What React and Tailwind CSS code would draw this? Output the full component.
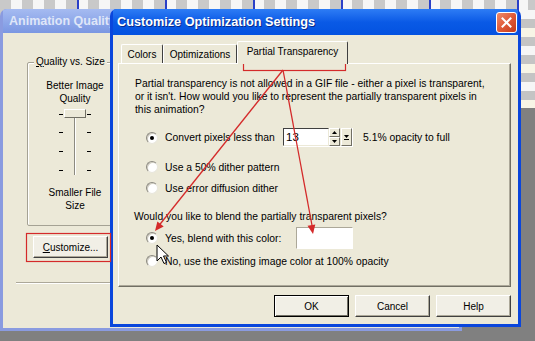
import React from 'react';

function Radio({ checked }) {
  return (
    <span className="flex h-[12px] w-[12px] shrink-0 items-center justify-center rounded-full border border-t-[#8c8a80] border-l-[#8c8a80] border-r-[#e8e6dc] border-b-[#e8e6dc] bg-white shadow-[inset_1px_1px_0_#d0cdc2]">
      {checked && <span className="h-[4px] w-[4px] rounded-full bg-black" />}
    </span>
  );
}

function Btn({ children, def }) {
  return (
    <div
      className={
        def
          ? 'flex h-[22px] w-[75px] items-center justify-center border border-black bg-[#f1efe6] shadow-[inset_1px_1px_0_#fff,inset_-1px_-1px_0_#716f64]'
          : 'flex h-[22px] w-[75px] items-center justify-center border border-t-white border-l-white border-r-[#404040] border-b-[#404040] bg-[#f1efe6] shadow-[inset_-1px_-1px_0_#aca899]'
      }
    >
      {children}
    </div>
  );
}

function Tab({ children, active }) {
  return (
    <div
      className={
        active
          ? 'relative z-10 -mb-[1px] flex h-[23px] w-[111px] items-start justify-center rounded-t-[2px] border-t border-l border-r border-t-white border-l-white border-r-[#404040] bg-[#ece9d8] pt-[3px]'
          : 'flex h-[19px] items-center justify-center rounded-t-[2px] border-t border-l border-r border-t-white border-l-white border-r-[#404040] bg-[#ece9d8]'
      }
    >
      {children}
    </div>
  );
}

export default function App() {
  return (
    <div className="relative h-[341px] w-[535px] overflow-hidden bg-[#808080] font-['Liberation_Sans',Arial,sans-serif] text-[10px] leading-[13px] text-black">
      {/* desktop behind the windows */}
      <div className="absolute left-0 top-0 h-[108px] w-full bg-[image:repeating-linear-gradient(90deg,transparent_0_77px,#2a3fc8_77px_79px,transparent_79px_88px),repeating-linear-gradient(90deg,#c9c9c9_0_11px,#f6f6f6_11px_22px)]" />
      <div className="absolute right-0 top-[10px] h-[98px] w-[16px] bg-[image:repeating-linear-gradient(180deg,#f6f6f6_0_9px,#c4c4c4_9px_18px,#f7f5e6_18px_27px,#c4c4c4_27px_36px)]" />

      {/* back window: Animation Quality */}
      <div className="absolute left-0 top-[9px] flex h-[322px] w-[462px] flex-col overflow-hidden rounded-t-[7px] bg-[#8a9be0] px-[3px] pb-[3px]">
        <div className="flex h-[24px] shrink-0 items-center pl-[6px] text-[12.5px] font-bold text-[#dfe6f8] bg-gradient-to-b from-[#a5bbf1] to-[#7b97e2]">
          Animation Quality
        </div>
        <div className="flex flex-1 flex-col bg-[#ece9d8]">
          <div className="relative ml-[24px] mt-[29px] h-[164px] w-[120px] rounded-[2px] border border-[#a5a294] shadow-[inset_1px_1px_0_#fff]">
            <span className="absolute -top-[7px] left-[6px] bg-[#ece9d8] px-[2px] leading-[12px]">
              <span className="underline">Q</span>uality vs. Size
            </span>
            <div className="flex w-[94px] flex-col items-center pt-[16px] leading-[13px]">
              <span>Better Image</span>
              <span>Quality</span>
              <div className="relative mt-[2px] h-[70px] w-[32px]">
                <div className="absolute left-[15px] top-[5px] h-[63px] w-[2px] border-l border-l-[#8c8a80] border-r border-r-white" />
                <div className="absolute left-0 top-[7px] h-[1px] w-[4px] bg-black" />
                <div className="absolute left-0 top-[25px] h-[1px] w-[4px] bg-black" />
                <div className="absolute left-0 top-[44px] h-[1px] w-[4px] bg-black" />
                <div className="absolute left-0 top-[63px] h-[1px] w-[4px] bg-black" />
                <div className="absolute right-0 top-[7px] h-[1px] w-[4px] bg-black" />
                <div className="absolute right-0 top-[25px] h-[1px] w-[4px] bg-black" />
                <div className="absolute right-0 top-[44px] h-[1px] w-[4px] bg-black" />
                <div className="absolute right-0 top-[63px] h-[1px] w-[4px] bg-black" />
                <div className="absolute left-[5px] top-[2px] h-[9px] w-[22px] border border-t-white border-l-white border-r-[#716f64] border-b-[#716f64] bg-[#ece9d8]" />
              </div>
              <span className="mt-[9px]">Smaller File</span>
              <span>Size</span>
            </div>
          </div>
          <div className="ml-[30px] mt-[10px]">
            <Btn>
              <span>
                <span className="underline">C</span>ustomize...
              </span>
            </Btn>
          </div>
          <div className="ml-[13px] mt-[24px] h-[2px] w-[120px] border-t border-t-[#aca899] border-b border-b-white" />
        </div>
      </div>

      {/* front dialog: Customize Optimization Settings */}
      <div className="absolute left-[110px] top-[9px] flex h-[318px] w-[411px] flex-col overflow-hidden rounded-t-[7px] bg-[#0a46dc] px-[3px] pb-[3px]">
        <div className="flex h-[26px] shrink-0 items-center justify-between bg-gradient-to-b from-[#2d7cf5] via-[#0a5ae6] to-[#0452e0] pl-[4px] pr-[1px]">
          <span className="text-[12.7px] font-bold text-white [text-shadow:1px_1px_0_#0a2a8a]">Customize Optimization Settings</span>
          <div className="flex h-[21px] w-[21px] items-center justify-center rounded-[3px] border border-white bg-gradient-to-br from-[#ee8a6a] via-[#e05a38] to-[#c23a1a]">
            <svg width="11" height="11" viewBox="0 0 11 11">
              <path d="M1.5 1.5 L9.5 9.5 M9.5 1.5 L1.5 9.5" stroke="#fff" strokeWidth="2" strokeLinecap="square" />
            </svg>
          </div>
        </div>
        <div className="flex flex-1 flex-col bg-[#ece9d8]">
          <div className="flex h-[28px] items-end pl-[8px]">
            <div className="w-[42px]">
              <Tab>Colors</Tab>
            </div>
            <div className="w-[74px]">
              <Tab>Optimizations</Tab>
            </div>
            <Tab active>Partial Transparency</Tab>
          </div>
          <div className="ml-[5px] mr-[7px] flex h-[224px] flex-col border border-t-white border-l-white border-r-[#716f64] border-b-[#716f64] shadow-[inset_-1px_-1px_0_#aca899] pt-[13px] text-[10.35px]">
            <p className="pl-[16px] leading-[13px]">
              Partial transparency is not allowed in a GIF file - either a pixel is transparent,
              <br />
              or it isn't. How would you like to represent the partially transparent pixels in
              <br />
              this animation?
            </p>
            <div className="mt-[12px] flex h-[19px] items-center pl-[27px]">
              <Radio checked />
              <span className="ml-[7px] w-[118px]">Convert pixels less than</span>
              <div className="flex h-[19px] border-b border-r border-b-white border-r-white">
                <div className="flex w-[46px] items-center border border-t-[#404040] border-l-[#404040] border-r-[#ece9d8] border-b-[#ece9d8] bg-white pl-[2px] text-[11.5px]">
                  13
                </div>
                <div className="flex w-[11px] flex-col">
                  <div className="flex h-1/2 items-center justify-center border border-t-white border-l-white border-r-[#716f64] border-b-[#716f64] bg-[#ece9d8]">
                    <svg width="5" height="3" viewBox="0 0 5 3"><path d="M2.5 0 L5 3 L0 3 Z" fill="#000" /></svg>
                  </div>
                  <div className="flex h-1/2 items-center justify-center border border-t-white border-l-white border-r-[#716f64] border-b-[#716f64] bg-[#ece9d8]">
                    <svg width="5" height="3" viewBox="0 0 5 3"><path d="M0 0 L5 0 L2.5 3 Z" fill="#000" /></svg>
                  </div>
                </div>
                <div className="ml-[1px] flex w-[11px] flex-col items-center justify-center gap-[1px] border border-t-white border-l-white border-r-[#716f64] border-b-[#716f64] bg-[#ece9d8]">
                  <svg width="5" height="3" viewBox="0 0 5 3"><path d="M0 0 L5 0 L2.5 3 Z" fill="#000" /></svg>
                  <div className="h-[1px] w-[5px] bg-black" />
                </div>
              </div>
              <span className="ml-[10px]">5.1% opacity to full</span>
            </div>
            <div className="mt-[12px] flex h-[16px] items-center gap-[7px] pl-[27px]">
              <Radio />
              <span>Use a 50% dither pattern</span>
            </div>
            <div className="mt-[5px] flex h-[16px] items-center gap-[7px] pl-[27px]">
              <Radio />
              <span>Use error diffusion dither</span>
            </div>
            <p className="mt-[14px] pl-[15px] leading-[13px]">Would you like to blend the partially transparent pixels?</p>
            <div className="mt-[4px] flex h-[22px] items-center pl-[27px]">
              <Radio checked />
              <span className="ml-[7px] w-[131px]">Yes, blend with this color:</span>
              <div className="h-[22px] w-[57px] border border-t-[#aca899] border-l-[#aca899] border-r-white border-b-white bg-white" />
            </div>
            <div className="mt-[4px] flex h-[16px] items-center gap-[7px] pl-[27px]">
              <Radio />
              <span>No, use the existing image color at 100% opacity</span>
            </div>
          </div>
          <div className="mt-[8px] flex justify-end gap-[6px] pr-[7px]">
            <Btn def>OK</Btn>
            <Btn>Cancel</Btn>
            <Btn>Help</Btn>
          </div>
        </div>
      </div>

      {/* annotations drawn over the screenshot */}
      <svg className="pointer-events-none absolute left-0 top-0" width="535" height="341" viewBox="0 0 535 341">
        <rect x="243.5" y="44.5" width="102" height="26" fill="none" stroke="#d42a2a" strokeWidth="1.2" />
        <rect x="26.5" y="233.5" width="84" height="28" fill="none" stroke="#d42a2a" strokeWidth="1.2" />
        <line x1="283" y1="70" x2="157" y2="228" stroke="#d42a2a" strokeWidth="1.3" />
        <polygon points="155,231 163.7,226.4 157.4,221.4" fill="#d42a2a" />
        <line x1="283" y1="70" x2="312.5" y2="228" stroke="#d42a2a" strokeWidth="1.3" />
        <polygon points="313,234 315.3,224.4 307.5,225.8" fill="#d42a2a" />
        <path d="M157 245 L157 261 L161 257 L164 263.5 L166.5 262.5 L163.5 256 L168.5 256 Z" fill="#fff" stroke="#000" strokeWidth="1" strokeLinejoin="miter" />
      </svg>
    </div>
  );
}
